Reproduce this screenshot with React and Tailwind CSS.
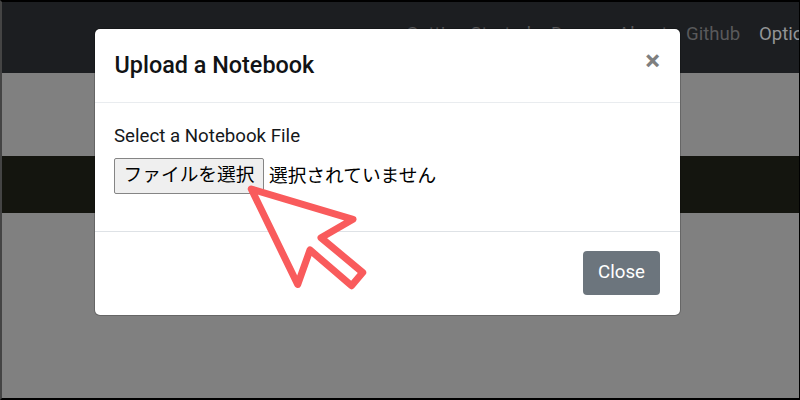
const navLinks = [
  { label: "Getting Started", width: "w-[126px]" },
  { label: "Demo", width: "w-[48px]" },
  { label: "About", width: "w-[49px]" },
  { label: "Github", width: "w-[54px]" },
];

function Navbar() {
  return (
    <nav className="flex h-[71px] shrink-0 items-start gap-[19px] bg-[#1c1e21] pt-[18px] pl-[404px] text-[18.6px] leading-7 whitespace-nowrap text-[#59595b]">
      {navLinks.map((link) => (
        <a key={link.label} className={`shrink-0 ${link.width}`}>
          {link.label}
        </a>
      ))}
      <a className="shrink-0 text-[#929496]">Options</a>
    </nav>
  );
}

function PointerArrow() {
  return (
    <svg
      className="pointer-events-none absolute top-[180px] left-[240px] h-[120px] w-[140px]"
      viewBox="240 180 140 120"
      fill="none"
      stroke="#f95b5c"
      strokeWidth="7"
      strokeLinejoin="round"
    >
      <path
        fill="#fff"
        d="M251.3 189 353 219.3 321 237.7 362.7 272.5 351.5 285.7 310 250 297.7 284.5Z"
      />
    </svg>
  );
}

function UploadModal() {
  return (
    <div className="flex h-[286px] w-[585px] flex-col rounded-[5px] bg-white text-[#15181b] shadow-[0_0_0_1px_rgba(0,0,0,0.2)]">
      <div className="flex h-[74px] shrink-0 items-start justify-between border-b border-[#e9ecef] pr-5 pl-[19.5px]">
        <h5 className="pt-[18px] text-[23.4px] leading-9 font-medium text-[#111315]">
          Upload a Notebook
        </h5>
        <button
          className="pt-[14px] text-[28px] leading-9 font-bold text-[#7f7f7f]"
          aria-label="Close dialog"
        >
          &times;
        </button>
      </div>
      <div className="flex h-[129px] shrink-0 flex-col border-b border-[#dee2e6] pt-[19px] pl-[19px] text-[18.7px]">
        <label className="leading-7">Select a Notebook File</label>
        <div className="mt-[8px] flex items-center gap-[5px] text-black">
          <button className="h-[36px] w-[150px] rounded-[2px] border border-[#858585] bg-[#efefef] pb-[2px] leading-8 whitespace-nowrap">
            ファイルを選択
          </button>
          <span>選択されていません</span>
        </div>
      </div>
      <div className="flex flex-1 items-start justify-end pt-[19px] pr-[20px]">
        <button className="h-[44px] w-[77px] rounded-[4px] bg-[#6c757d] pb-px text-[18.7px] text-white">
          Close
        </button>
      </div>
    </div>
  );
}

export default function App() {
  return (
    <div className="relative h-[400px] w-[800px] overflow-hidden font-['Roboto','Noto_Sans_CJK_JP',sans-serif]">
      <div className="flex h-full flex-col overflow-hidden border-2 border-r border-black border-l-[#444] bg-[#808080]">
        <Navbar />
        <div className="mt-[83px] h-[57px] shrink-0 bg-[#14150f]" />
      </div>
      <div className="absolute inset-0 flex items-start pt-[29px] pl-[95px]">
        <UploadModal />
      </div>
      <PointerArrow />
    </div>
  );
}
